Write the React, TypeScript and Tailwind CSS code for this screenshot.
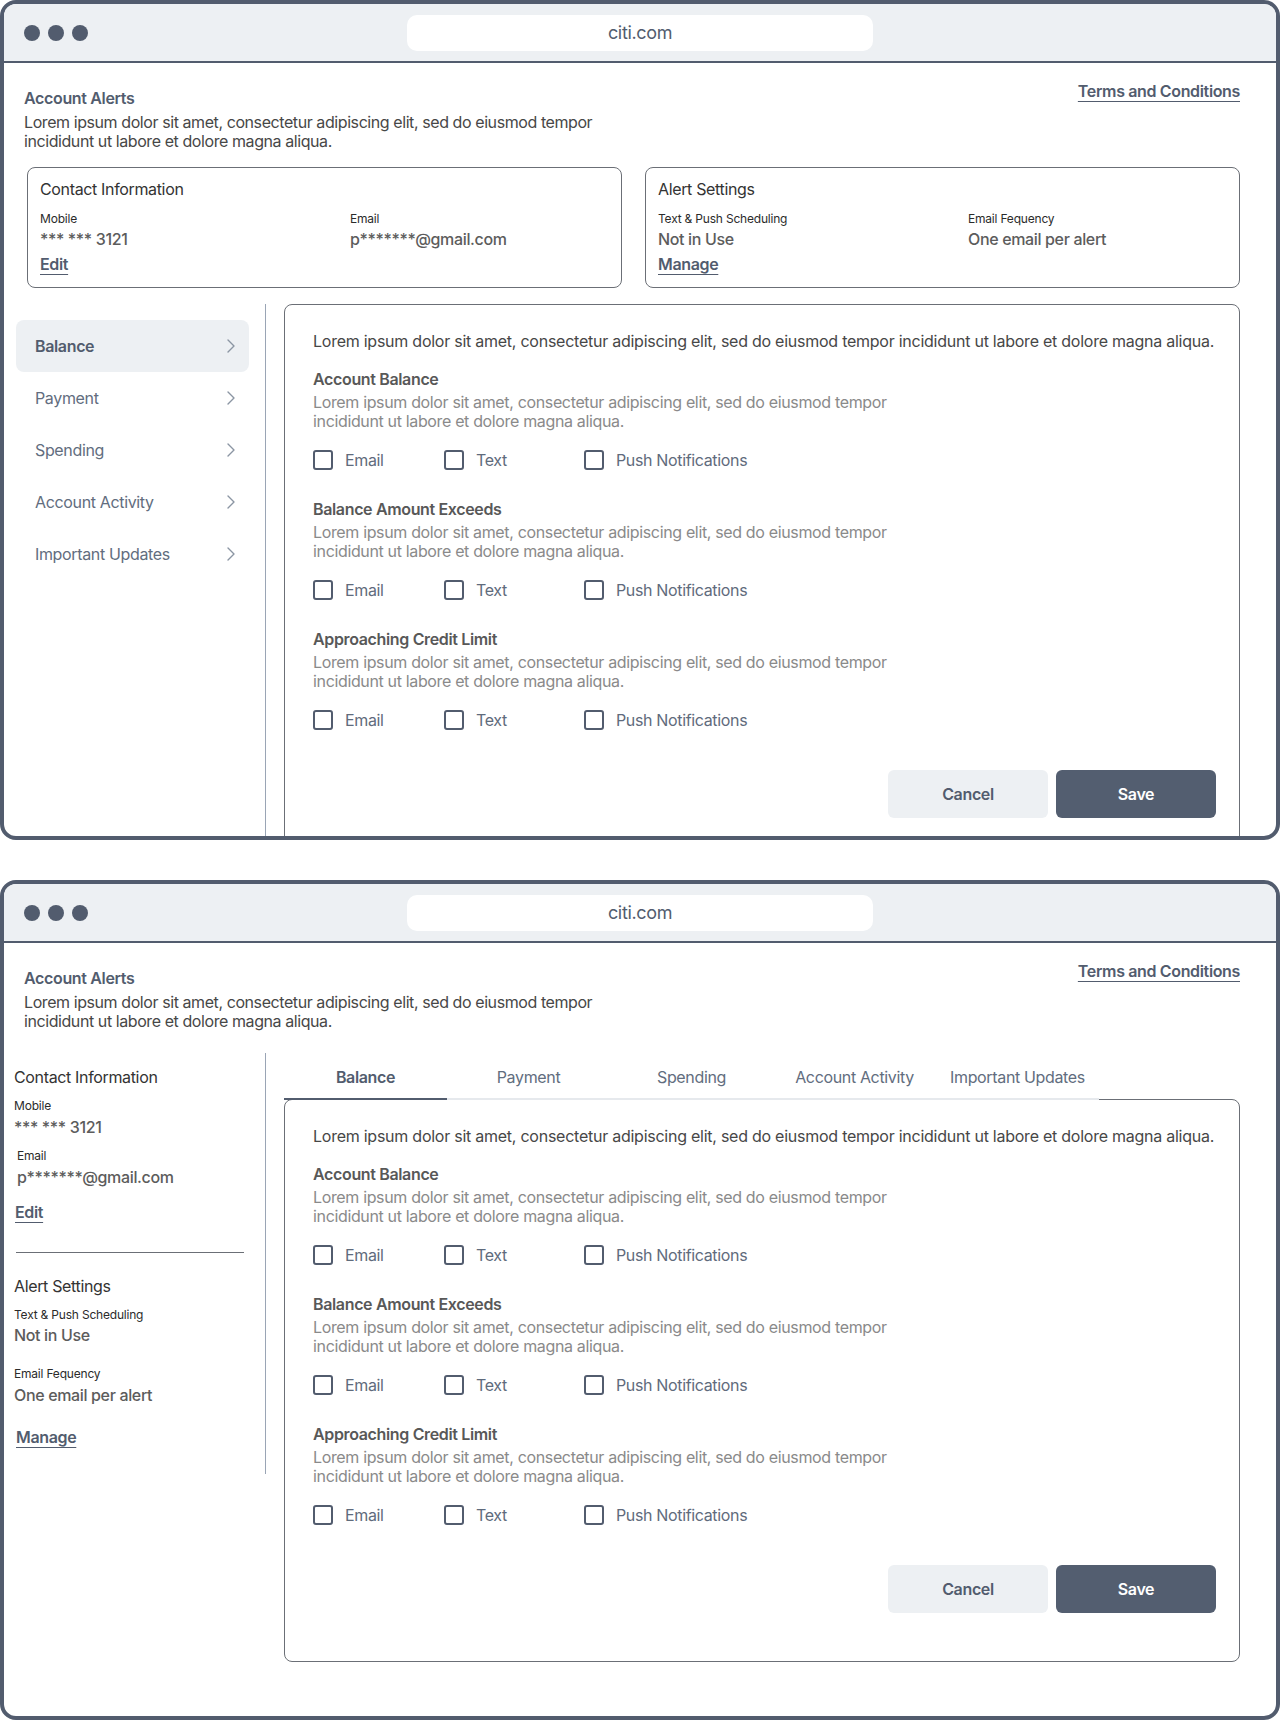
import { ChevronRight } from "lucide-react";

const LOREM_SHORT =
  "Lorem ipsum dolor sit amet, consectetur adipiscing elit, sed do eiusmod tempor incididunt ut labore et dolore magna aliqua.";

const SECTIONS = ["Account Balance", "Balance Amount Exceeds", "Approaching Credit Limit"];
const CATEGORIES = ["Balance", "Payment", "Spending", "Account Activity", "Important Updates"];

function BrowserWindow({ children, className = "" }: { children: React.ReactNode; className?: string }) {
  return (
    <div className={`h-[840px] rounded-2xl border-4 border-[#525c6e] bg-white overflow-hidden flex flex-col ${className}`}>
      {/* title bar */}
      <div className="h-[59px] shrink-0 bg-[#edf0f3] border-b-2 border-[#525c6e] grid grid-cols-[1fr_466px_1fr] items-center">
        <div className="flex items-center gap-2 pl-5">
          <span className="h-4 w-4 rounded-full bg-[#525c6e]" />
          <span className="h-4 w-4 rounded-full bg-[#525c6e]" />
          <span className="h-4 w-4 rounded-full bg-[#525c6e]" />
        </div>
        <div className="h-9 rounded-[10px] bg-white flex items-center justify-center text-[18px] text-[#525c6e]">
          citi.com
        </div>
        <div />
      </div>
      {children}
    </div>
  );
}

function PageHeader() {
  return (
    <div className="flex justify-between pl-5 pr-9">
      <div className="w-[590px] pt-[25px]">
        <h1 className="text-base leading-5 font-semibold text-[#525c6e]">Account Alerts</h1>
        <p className="mt-[5px] text-base leading-[19px] tracking-[-0.42px] text-[#474747]">{LOREM_SHORT}</p>
      </div>
      <a className="pt-[18px] text-base leading-5 font-semibold text-[#525c6e] underline underline-offset-4 decoration-1">
        Terms and Conditions
      </a>
    </div>
  );
}

function Field({ label, value }: { label: string; value: string }) {
  return (
    <div>
      <div className="text-xs leading-4 tracking-[-0.2px] text-[#2b2b2b]">{label}</div>
      <div className="mt-[2px] text-base leading-5 font-medium text-[#5c5c5c]">{value}</div>
    </div>
  );
}

function LinkText({ children, className = "" }: { children: React.ReactNode; className?: string }) {
  return (
    <a className={`block w-fit text-base leading-5 font-semibold text-[#525c6e] underline underline-offset-4 decoration-1 ${className}`}>
      {children}
    </a>
  );
}

function InfoCard({ title, left, right, link }: { title: string; left: [string, string]; right: [string, string]; link: string }) {
  return (
    <div className="h-[121px] rounded-lg border border-[#6b6f76] px-3 pt-[11px]">
      <div className="text-base leading-5 text-[#333]">{title}</div>
      <div className="mt-3 grid grid-cols-[310px_1fr]">
        <div>
          <Field label={left[0]} value={left[1]} />
          <LinkText className="mt-[5px]">{link}</LinkText>
        </div>
        <Field label={right[0]} value={right[1]} />
      </div>
    </div>
  );
}

function Check({ label, className = "" }: { label: string; className?: string }) {
  return (
    <label className={`flex items-center gap-3 ${className}`}>
      <span className="h-5 w-5 rounded-[3px] border-2 border-[#525c6e]" />
      <span className="text-base leading-5 text-[#5f6b7c]">{label}</span>
    </label>
  );
}

function AlertPanel() {
  return (
    <div className="rounded-lg border border-[#6b6f76] bg-white pl-7 pr-[23px] pt-[26px] pb-12">
      <p className="text-base leading-5 tracking-[-0.25px] text-[#474747]">{LOREM_SHORT}</p>
      {SECTIONS.map((title, i) => (
        <div key={title} className={i === 0 ? "mt-[18px]" : "mt-[29px]"}>
          <h3 className="text-base leading-5 font-semibold text-[#585858]">{title}</h3>
          <p className="mt-1 w-[580px] text-base leading-[19px] text-[#8a8a8a]">{LOREM_SHORT}</p>
          <div className="mt-[19px] flex h-5">
            <Check label="Email" className="w-[131px]" />
            <Check label="Text" className="w-[140px]" />
            <Check label="Push Notifications" />
          </div>
        </div>
      ))}
      <div className="mt-10 flex justify-end gap-2">
        <button className="h-12 w-40 rounded-md bg-[#edf0f3] text-base font-semibold text-[#525c6e]">Cancel</button>
        <button className="h-12 w-40 rounded-md bg-[#535e70] text-base font-semibold text-white">Save</button>
      </div>
    </div>
  );
}

function SideNav() {
  return (
    <div className="w-[262px] shrink-0 border-r border-[#9aa5b5] pl-3 pr-4 pt-4">
      {CATEGORIES.map((name, i) => (
        <div
          key={name}
          className={`flex h-[52px] items-center justify-between rounded-lg pl-[19px] pr-[6px] ${
            i === 0 ? "bg-[#edf0f3] font-semibold text-[#525c6e]" : "text-[#626d7e]"
          }`}
        >
          <span className="text-base leading-5">{name}</span>
          <ChevronRight size={24} strokeWidth={1.4} className="text-[#8b95a3]" />
        </div>
      ))}
    </div>
  );
}

function DesktopLayout() {
  return (
    <BrowserWindow>
      <PageHeader />
      <div className="mt-4 ml-[23px] mr-9 grid grid-cols-2 gap-[23px]">
        <InfoCard
          title="Contact Information"
          left={["Mobile", "*** *** 3121"]}
          right={["Email", "p*******@gmail.com"]}
          link="Edit"
        />
        <InfoCard
          title="Alert Settings"
          left={["Text & Push Scheduling", "Not in Use"]}
          right={["Email Fequency", "One email per alert"]}
          link="Manage"
        />
      </div>
      <div className="mt-4 flex">
        <SideNav />
        <div className="ml-[18px] mr-9 flex-1">
          <AlertPanel />
        </div>
      </div>
    </BrowserWindow>
  );
}

function TabsLayout() {
  return (
    <BrowserWindow className="mt-10">
      <PageHeader />
      <div className="mt-[22px] flex items-start">
        <div className="w-[262px] shrink-0 border-r border-[#9aa5b5] pl-[10px] pt-[14px] pb-[27px]">
          <div className="text-base leading-5 text-[#333]">Contact Information</div>
          <div className="mt-[11px] text-xs leading-4 tracking-[-0.2px] text-[#2b2b2b]">Mobile</div>
          <div className="mt-[3px] text-base leading-5 font-medium text-[#5c5c5c]">*** *** 3121</div>
          <div className="ml-[3px] mt-[11px] text-xs leading-4 tracking-[-0.2px] text-[#2b2b2b]">Email</div>
          <div className="ml-[3px] mt-[3px] text-base leading-5 font-medium text-[#5c5c5c]">p*******@gmail.com</div>
          <LinkText className="ml-px mt-[15px]">Edit</LinkText>
          <div className="ml-[2px] mt-[30px] h-px w-[228px] bg-[#6b6f76]" />
          <div className="mt-[23px] text-base leading-5 text-[#333]">Alert Settings</div>
          <div className="mt-[11px] text-xs leading-4 tracking-[-0.2px] text-[#2b2b2b]">Text &amp; Push Scheduling</div>
          <div className="mt-[2px] text-base leading-5 font-medium text-[#5c5c5c]">Not in Use</div>
          <div className="mt-[21px] text-xs leading-4 tracking-[-0.2px] text-[#2b2b2b]">Email Fequency</div>
          <div className="mt-[3px] text-base leading-5 font-medium text-[#5c5c5c]">One email per alert</div>
          <LinkText className="ml-[2px] mt-[22px]">Manage</LinkText>
        </div>
        <div className="ml-[18px] mr-9 flex-1">
          <div className="relative z-10 flex">
            {CATEGORIES.map((name, i) => (
              <div
                key={name}
                className={`flex h-[47px] w-[163px] items-center justify-center border-b-2 pt-[2px] text-base leading-5 ${
                  i === 0 ? "border-[#525c6e] font-semibold text-[#525c6e]" : "border-[#e6e9ed] text-[#626d7e]"
                }`}
              >
                {name}
              </div>
            ))}
          </div>
          <div className="-mt-px">
            <AlertPanel />
          </div>
        </div>
      </div>
    </BrowserWindow>
  );
}

export default function App() {
  return (
    <div className="w-[1280px] bg-white font-['Inter',sans-serif] tracking-[-0.35px]">
      <DesktopLayout />
      <TabsLayout />
    </div>
  );
}
